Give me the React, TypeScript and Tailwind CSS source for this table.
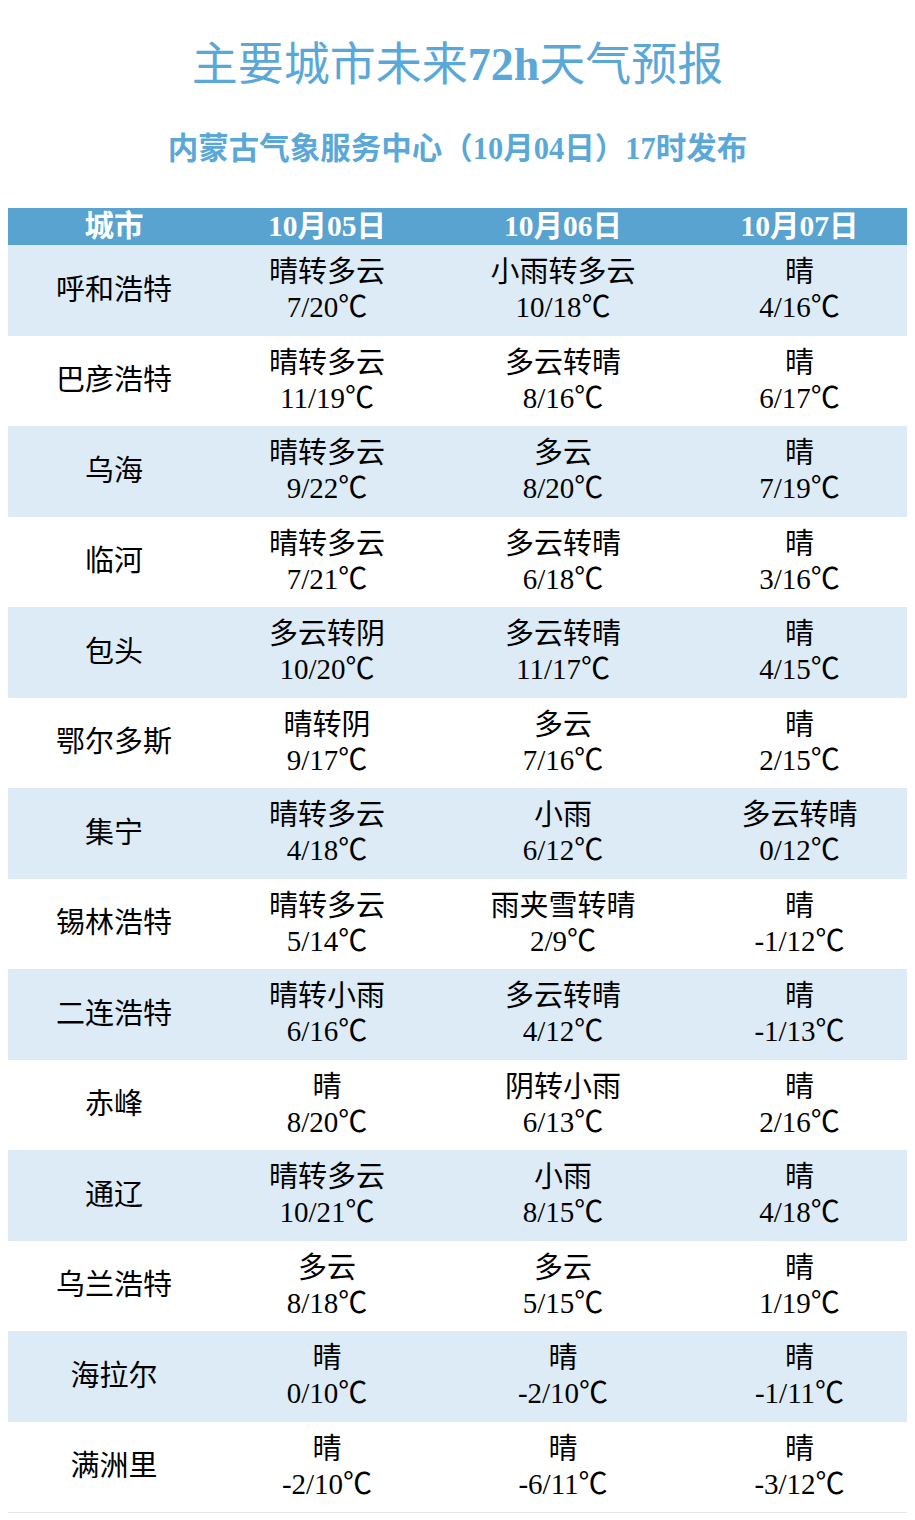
const rows: [string, string, string, string, string, string, string][] = [
  ["呼和浩特", "晴转多云", "7/20℃", "小雨转多云", "10/18℃", "晴", "4/16℃"],
  ["巴彦浩特", "晴转多云", "11/19℃", "多云转晴", "8/16℃", "晴", "6/17℃"],
  ["乌海", "晴转多云", "9/22℃", "多云", "8/20℃", "晴", "7/19℃"],
  ["临河", "晴转多云", "7/21℃", "多云转晴", "6/18℃", "晴", "3/16℃"],
  ["包头", "多云转阴", "10/20℃", "多云转晴", "11/17℃", "晴", "4/15℃"],
  ["鄂尔多斯", "晴转阴", "9/17℃", "多云", "7/16℃", "晴", "2/15℃"],
  ["集宁", "晴转多云", "4/18℃", "小雨", "6/12℃", "多云转晴", "0/12℃"],
  ["锡林浩特", "晴转多云", "5/14℃", "雨夹雪转晴", "2/9℃", "晴", "-1/12℃"],
  ["二连浩特", "晴转小雨", "6/16℃", "多云转晴", "4/12℃", "晴", "-1/13℃"],
  ["赤峰", "晴", "8/20℃", "阴转小雨", "6/13℃", "晴", "2/16℃"],
  ["通辽", "晴转多云", "10/21℃", "小雨", "8/15℃", "晴", "4/18℃"],
  ["乌兰浩特", "多云", "8/18℃", "多云", "5/15℃", "晴", "1/19℃"],
  ["海拉尔", "晴", "0/10℃", "晴", "-2/10℃", "晴", "-1/11℃"],
  ["满洲里", "晴", "-2/10℃", "晴", "-6/11℃", "晴", "-3/12℃"],
]

const font = { fontFamily: '"Liberation Serif", "Noto Sans CJK SC", serif' }

function Cell({ top, bottom }: { top: string; bottom: string }) {
  return (
    <div className="flex flex-col items-center justify-center leading-[35px]">
      <span>{top}</span>
      <span>{bottom}</span>
    </div>
  )
}

export default function App() {
  return (
    <div className="w-[915px] h-[1520px] bg-white text-black" style={font}>
      <h1 className="pt-[36px] text-center text-[46px] leading-[58px] text-[#5aa8d8] font-normal">
        主要城市未来<span className="font-bold">72h</span>天气预报
      </h1>
      <p className="mt-[35px] text-center text-[30.5px] leading-[40px] font-bold text-[#5aa8d8]">
        内蒙古气象服务中心（10月04日）17时发布
      </p>

      <div className="mx-[8px] mt-[39px] w-[899px] border-b border-[#e6e6e6]">
        <div className="grid grid-cols-[212px_214px_258px_215px] h-[37px] bg-[#58a3d0] text-white text-[29.5px] font-bold leading-[37px] text-center">
          <div>城市</div>
          <div>10月05日</div>
          <div>10月06日</div>
          <div>10月07日</div>
        </div>
        {rows.map((r, i) => (
          <div
            key={r[0]}
            className={`grid grid-cols-[212px_214px_258px_215px] h-[90.5px] text-[29px] text-center ${
              i % 2 === 0 ? "bg-[#ddebf6]" : "bg-white"
            }`}
          >
            <div className="flex items-center justify-center">{r[0]}</div>
            <Cell top={r[1]} bottom={r[2]} />
            <Cell top={r[3]} bottom={r[4]} />
            <Cell top={r[5]} bottom={r[6]} />
          </div>
        ))}
      </div>
    </div>
  )
}
